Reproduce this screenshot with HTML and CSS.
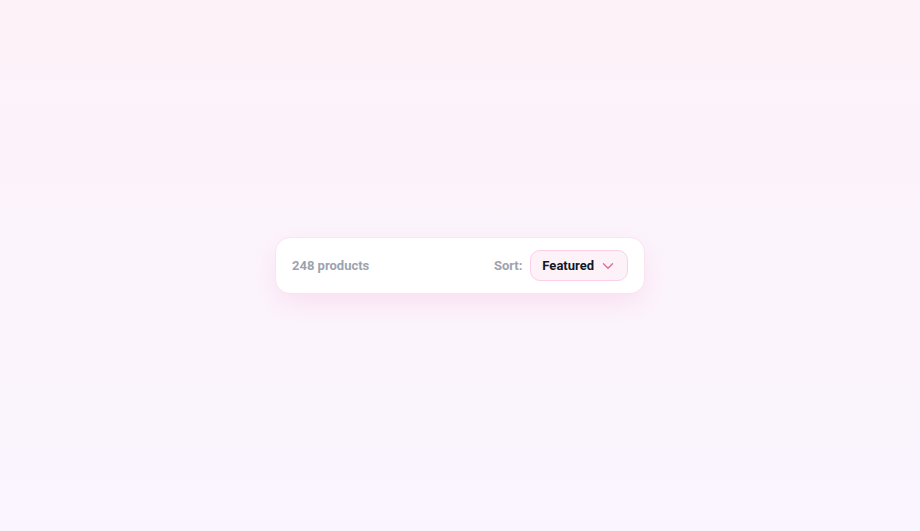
FILE: index.html
```html
<!DOCTYPE html>
<html lang="en">
<head>
<meta charset="utf-8">
<title>Products</title>
<link rel="stylesheet" href="styles.css">
</head>
<body>
<main class="page">
  <div class="toolbar">
    <span class="count">248 products</span>
    <div class="sort">
      <span class="sort-label">Sort:</span>
      <button class="select" type="button">
        <span class="select-value">Featured</span>
        <svg class="chev" width="12" height="12" viewBox="0 0 12 12" fill="none" aria-hidden="true">
          <path d="M1.5 3.8 L6 8.2 L10.5 3.8" stroke="#db2777" stroke-width="1.3" stroke-linecap="round" stroke-linejoin="round"/>
        </svg>
      </button>
    </div>
  </div>
</main>
</body>
</html>
```

FILE: styles.css
```css
* { box-sizing: border-box; }
html, body { margin: 0; height: 100%; }
body {
  font-family: Roboto, "Liberation Sans", sans-serif;
  background: linear-gradient(180deg, #fdf2f8 0%, #faf5ff 100%);
}
.page {
  min-height: 100vh;
  display: flex;
  align-items: center;
  justify-content: center;
}
.toolbar {
  width: 370px;
  display: flex;
  align-items: center;
  justify-content: space-between;
  padding: 12px 16px;
  background: #ffffff;
  border: 1px solid #fbe3ef;
  border-radius: 15px;
  box-shadow: 0 10px 28px -6px rgba(236, 72, 153, 0.16);
}
.count {
  font-size: 13px;
  font-weight: 700;
  color: #9ca3af;
}
.sort {
  display: flex;
  align-items: center;
  gap: 8px;
}
.sort-label {
  font-size: 13px;
  font-weight: 700;
  color: #9ca3af;
}
.select {
  display: flex;
  align-items: center;
  gap: 8px;
  height: 31px;
  padding: 0 13px 0 11px;
  background: #fdf2f8;
  border: 1px solid #fbcfe8;
  border-radius: 10px;
  font-family: inherit;
  font-size: 13px;
  font-weight: 700;
  color: #111827;
  cursor: pointer;
}
.chev { opacity: 0.7; display: block; }
```
